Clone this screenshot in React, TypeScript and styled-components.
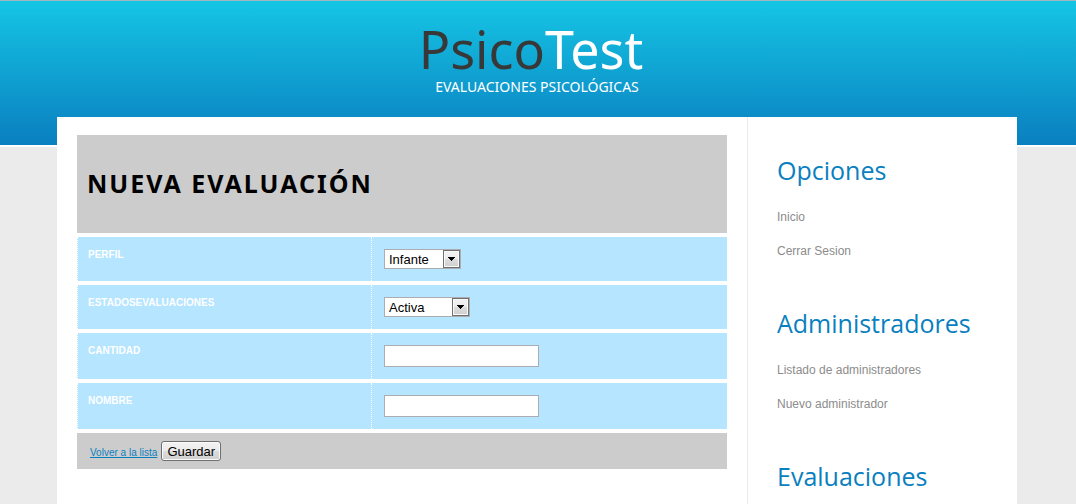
import React from "react";
import styled, { createGlobalStyle } from "styled-components";

const display = `"Noto Sans", "Open Sans", sans-serif`;
const heading = `"Open Sans", "Noto Sans", sans-serif`;
const body = `"Liberation Sans", Arial, sans-serif`;

const GlobalStyle = createGlobalStyle`
  *, *::before, *::after { box-sizing: border-box; }
  body {
    margin: 0;
    background: #ebebeb;
    font-family: ${body};
    font-size: 12px;
    color: #888;
  }
`;

const Page = styled.div`
  min-height: 100vh;
  padding-right: 2px;
  background:
    linear-gradient(#a3b5bd, #a3b5bd) 0 0 / 100% 1px no-repeat,
    linear-gradient(#15c5e4, #0a7fc0) 0 1px / 100% 144px no-repeat,
    linear-gradient(#fff, #fff) 0 145px / 100% 2px no-repeat,
    #ebebeb;
`;

const Header = styled.header`
  display: flex;
  flex-direction: column;
  align-items: center;
  height: 117px;
  padding: 20px 12px 0 0;
`;

const Logo = styled.h1`
  margin: 0;
  font: 400 52px/58px ${display};
  color: #fff;
  white-space: nowrap;
`;

const LogoDark = styled.span`
  color: #383838;
`;

const Tagline = styled.p`
  margin: 0;
  padding-left: 12px;
  font: 400 14px/18px ${display};
  color: #fff;
  white-space: nowrap;
`;

const Container = styled.div`
  display: flex;
  max-width: 960px;
  min-height: calc(100vh - 117px);
  margin: 0 auto;
  background: #fff;
`;

const Main = styled.main`
  flex: 1;
  min-width: 0;
  padding: 18px 20px;
`;

const Sidebar = styled.aside`
  display: flex;
  flex-direction: column;
  gap: 46px;
  flex: 0 0 270px;
  padding: 35px 20px 0 29px;
  border-left: 1px solid #ebebeb;
`;

const Form = styled.form`
  display: flex;
  flex-direction: column;
  gap: 4px;
`;

const FormHeader = styled.div`
  display: flex;
  align-items: center;
  height: 98px;
  padding: 0 10px 2px;
  background: #ccc;
`;

const Title = styled.h2`
  margin: 0;
  font: 700 25px/36px ${display};
  letter-spacing: 2px;
  text-transform: uppercase;
  color: #000;
`;

const Row = styled.div`
  display: grid;
  grid-template-columns: 294fr 356fr;
  background: #b5e5ff;
`;

const LabelCell = styled.div`
  padding: 12px 10px;
  border-left: 1px dotted #fff;
`;

const FieldCell = styled.div`
  display: flex;
  padding: 12px;
  border-left: 1px dotted #fff;
`;

const Label = styled.label`
  display: block;
  font: 700 10px/12px ${body};
  text-transform: uppercase;
  color: #fff;
`;

const TextInput = styled.input`
  width: 155px;
  height: 22px;
  padding: 0 4px;
  border: 1px solid #abadb3;
  border-radius: 0;
  background: #fff;
  font: 13px ${body};
  color: #000;
`;

const SelectBox = styled.div<{ $width: number }>`
  position: relative;
  width: ${(p) => p.$width}px;
  height: 20px;
`;

const NativeSelect = styled.select`
  appearance: none;
  display: block;
  width: 100%;
  height: 20px;
  padding: 2px 20px 0 4px;
  border: 1px solid #abadb3;
  border-radius: 0;
  background: #fff;
  font: 13px/16px ${body};
  color: #000;
`;

const DropArrow = styled.span`
  position: absolute;
  top: 1px;
  right: 1px;
  display: flex;
  align-items: center;
  justify-content: center;
  width: 17px;
  height: 18px;
  border: 1px solid #707070;
  background: linear-gradient(#f2f2f2, #ebebeb 50%, #dddddd 50%, #cfcfcf);
  box-shadow: inset 0 0 0 1px #fafafa;
  pointer-events: none;
`;

const FormFooter = styled.div`
  display: flex;
  align-items: center;
  gap: 4px;
  padding: 8px 13px;
  background: #ccc;
`;

const BackLink = styled.a`
  padding-top: 4px;
  font: 10px/12px ${body};
  color: #0a7fc0;
`;

const SaveButton = styled.button`
  width: 60px;
  height: 20px;
  padding: 1px 0 0;
  border: 1px solid #707070;
  border-radius: 3px;
  background: linear-gradient(#f2f2f2, #ebebeb 50%, #dddddd 50%, #cfcfcf);
  box-shadow: inset 0 0 0 1px #fafafa;
  font: 13px/16px ${body};
  color: #000;
`;

const Section = styled.section`
  display: flex;
  flex-direction: column;
  gap: 21px;
`;

const SectionTitle = styled.h2`
  margin: 0;
  font: 400 25px/36px ${heading};
  color: #0a7fc0;
`;

const LinkList = styled.ul`
  display: flex;
  flex-direction: column;
  gap: 18px;
  margin: 0;
  padding: 0;
  list-style: none;
`;

const SideLink = styled.a`
  display: block;
  font: 12px/16px ${body};
  color: #8c8c8c;
  text-decoration: none;
`;

function SelectField({ id, width, value }: { id: string; width: number; value: string }) {
  return (
    <SelectBox $width={width}>
      <NativeSelect id={id} defaultValue={value}>
        <option>{value}</option>
      </NativeSelect>
      <DropArrow aria-hidden="true">
        <svg width="7" height="4" viewBox="0 0 7 4" shapeRendering="crispEdges">
          <path d="M0 0H7V1H6V2H5V3H4V4H3V3H2V2H1V1H0Z" fill="#000" />
        </svg>
      </DropArrow>
    </SelectBox>
  );
}

function FormRow({ id, label, children }: { id: string; label: string; children: React.ReactNode }) {
  return (
    <Row>
      <LabelCell>
        <Label htmlFor={id}>{label}</Label>
      </LabelCell>
      <FieldCell>{children}</FieldCell>
    </Row>
  );
}

const sections = [
  { title: "Opciones", links: ["Inicio", "Cerrar Sesion"] },
  { title: "Administradores", links: ["Listado de administradores", "Nuevo administrador"] },
  { title: "Evaluaciones", links: [] },
];

export default function App() {
  return (
    <>
      <GlobalStyle />
      <Page>
        <Header>
          <Logo>
            <LogoDark>Psico</LogoDark>Test
          </Logo>
          <Tagline>EVALUACIONES PSICOLÓGICAS</Tagline>
        </Header>
        <Container>
          <Main>
            <Form onSubmit={(e) => e.preventDefault()}>
              <FormHeader>
                <Title>Nueva evaluación</Title>
              </FormHeader>
              <FormRow id="perfil" label="Perfil">
                <SelectField id="perfil" width={77} value="Infante" />
              </FormRow>
              <FormRow id="estado" label="Estadosevaluaciones">
                <SelectField id="estado" width={86} value="Activa" />
              </FormRow>
              <FormRow id="cantidad" label="Cantidad">
                <TextInput id="cantidad" type="text" />
              </FormRow>
              <FormRow id="nombre" label="Nombre">
                <TextInput id="nombre" type="text" />
              </FormRow>
              <FormFooter>
                <BackLink href="#lista">Volver a la lista</BackLink>
                <SaveButton type="submit">Guardar</SaveButton>
              </FormFooter>
            </Form>
          </Main>
          <Sidebar>
            {sections.map((section) => (
              <Section key={section.title}>
                <SectionTitle>{section.title}</SectionTitle>
                {section.links.length > 0 && (
                  <LinkList>
                    {section.links.map((link) => (
                      <li key={link}>
                        <SideLink href="#">{link}</SideLink>
                      </li>
                    ))}
                  </LinkList>
                )}
              </Section>
            ))}
          </Sidebar>
        </Container>
      </Page>
    </>
  );
}
